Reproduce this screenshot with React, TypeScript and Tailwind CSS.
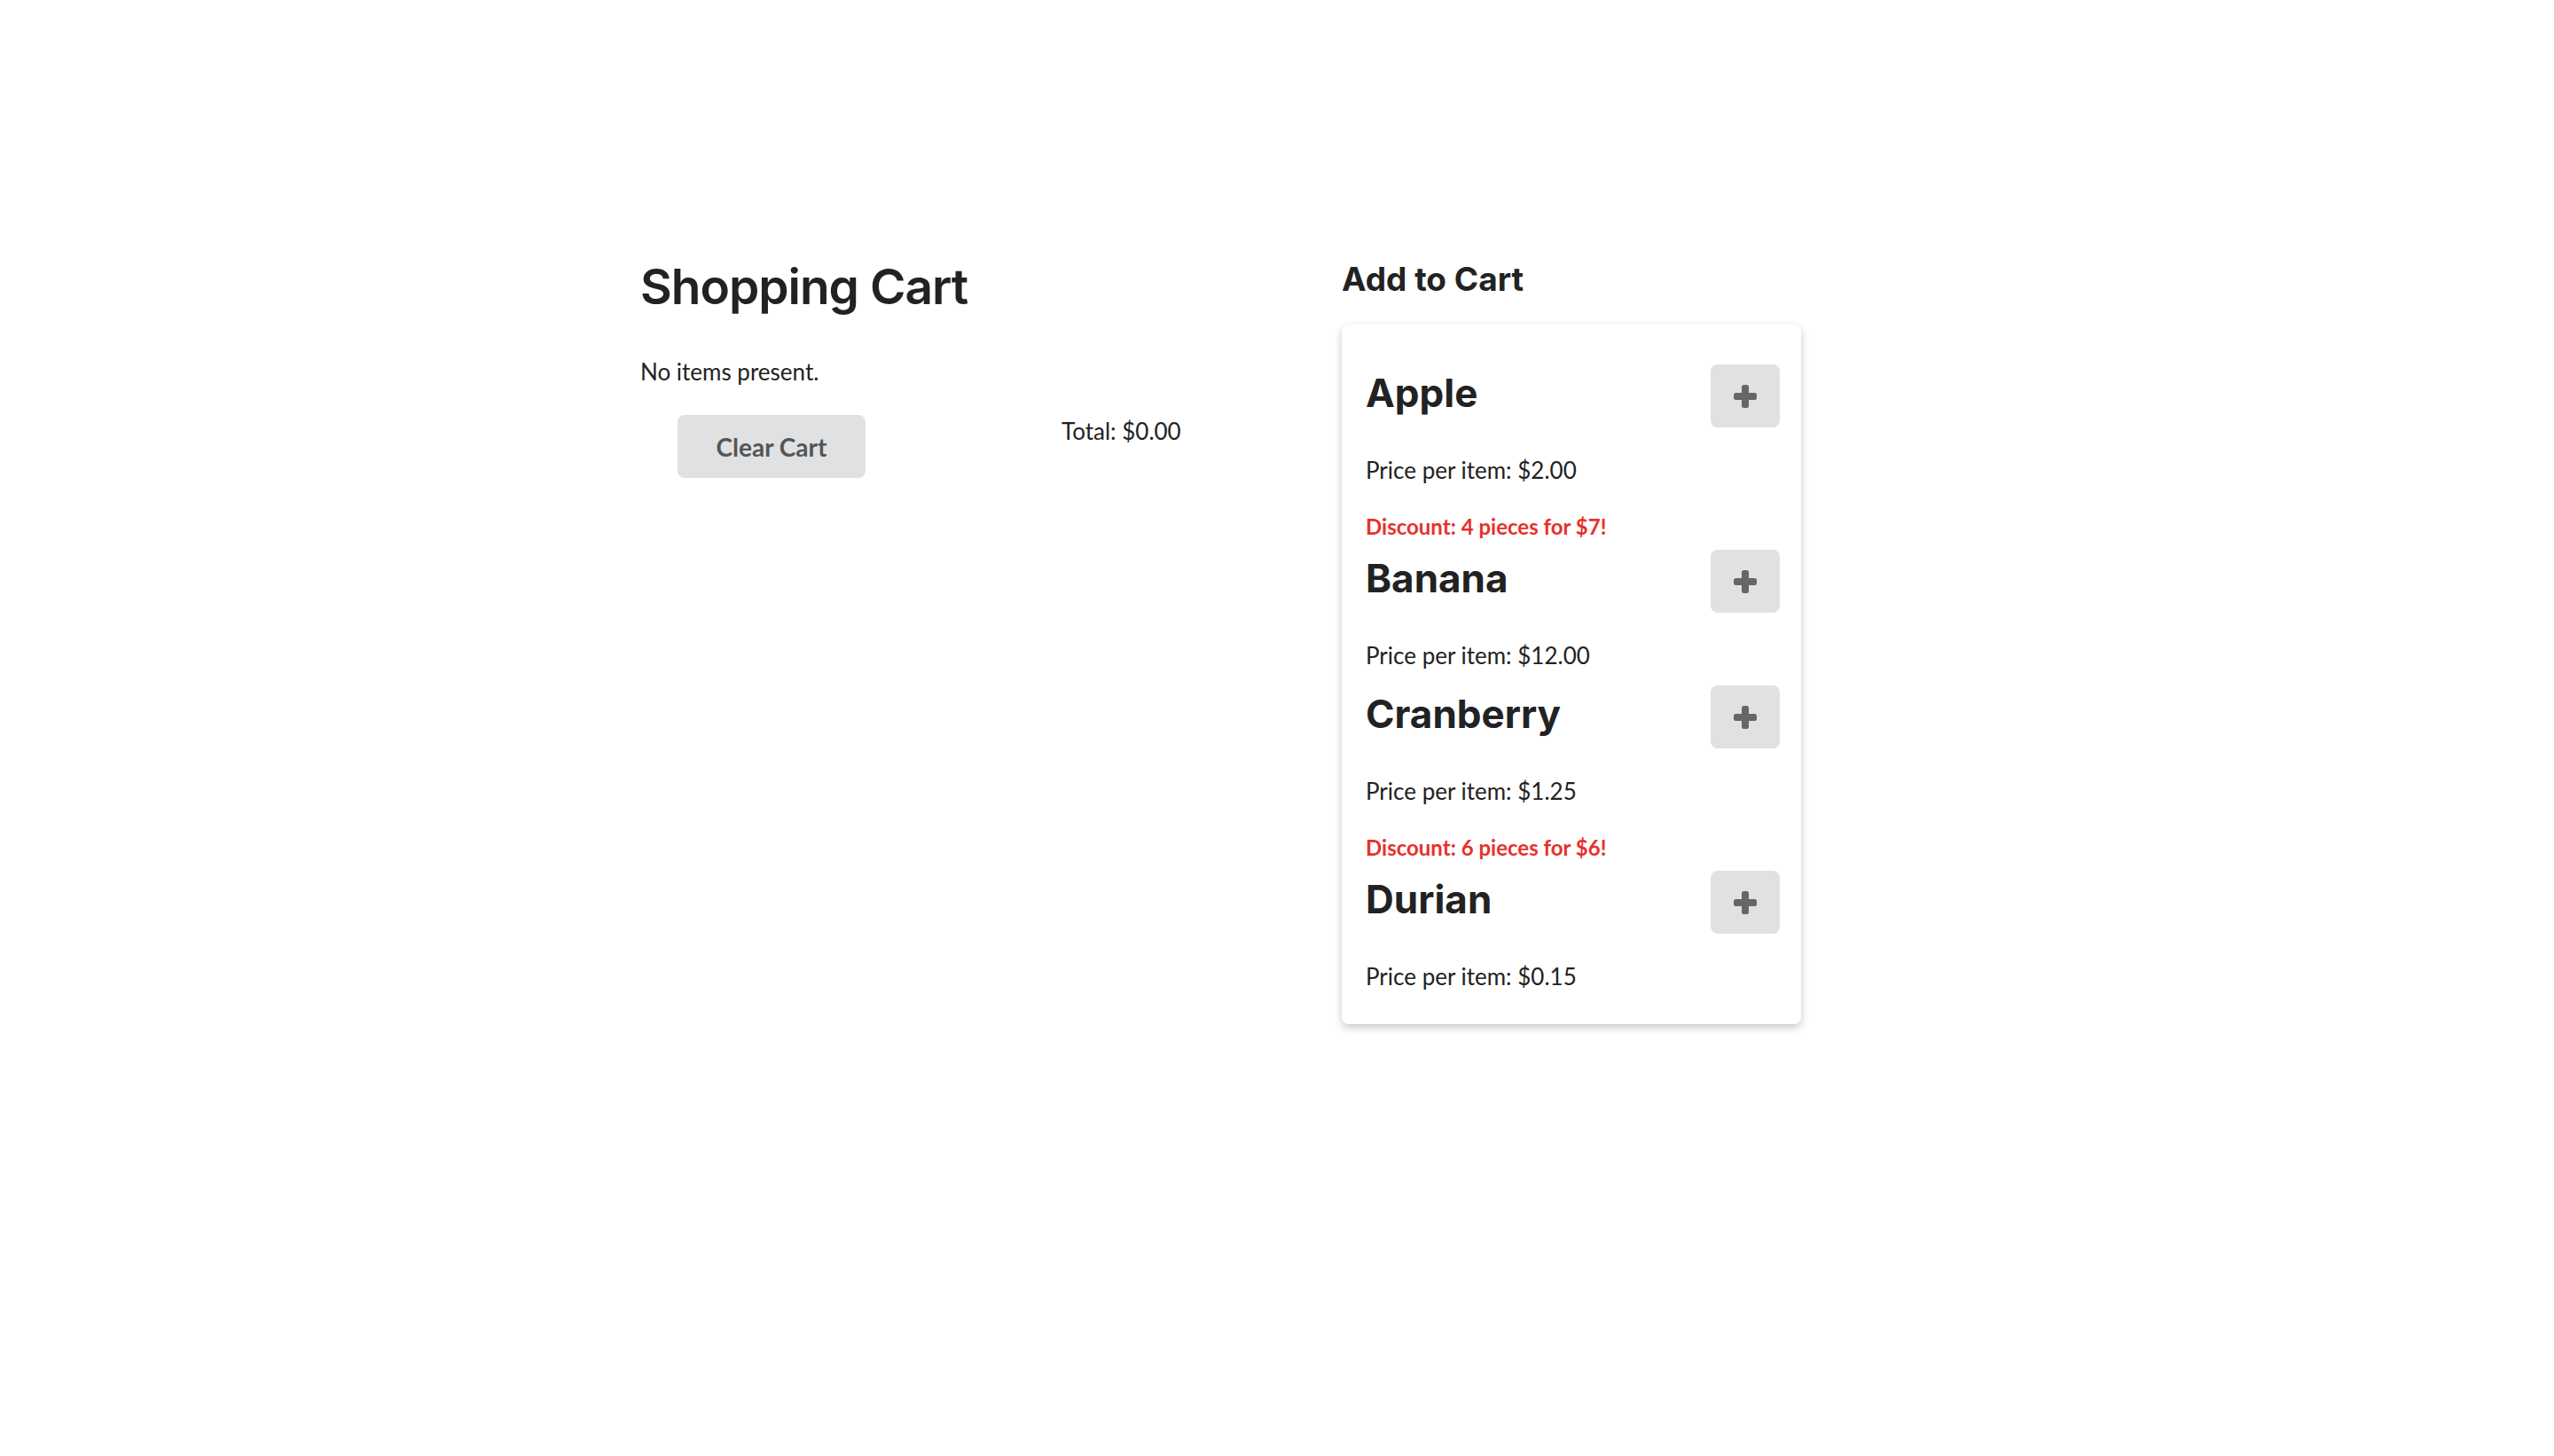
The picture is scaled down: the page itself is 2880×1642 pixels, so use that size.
const items = [
  { name: "Apple", price: "$2.00", discount: "Discount: 4 pieces for $7!" },
  { name: "Banana", price: "$12.00" },
  { name: "Cranberry", price: "$1.25", discount: "Discount: 6 pieces for $6!" },
  { name: "Durian", price: "$0.15" },
];

const body = { fontFamily: "Lato, 'Liberation Sans', sans-serif" };
const head = { fontFamily: "Inter, Roboto, sans-serif" };

function PlusIcon() {
  return (
    <svg width="26" height="26" viewBox="0 0 26 26" fill="#666666">
      <rect x="9" y="0" width="8" height="26" rx="2.5" />
      <rect x="0" y="9" width="26" height="8" rx="2.5" />
    </svg>
  );
}

function ProductRow({ name, price, discount }: { name: string; price: string; discount?: string }) {
  return (
    <div className="pb-[13px]">
      <div className="flex items-center justify-between">
        <h3 className="pb-[8px] text-[44px] font-bold leading-none text-[#222]" style={head}>
          {name}
        </h3>
        <button className="w-[78px] h-[71px] rounded-lg bg-[#e0e1e3] flex items-center justify-center">
          <PlusIcon />
        </button>
      </div>
      <p className="mt-[27px] text-[26px] leading-[42px] text-[#222]" style={body}>
        Price per item: {price}
      </p>
      {discount && (
        <p className="mt-[30px] text-[24px] leading-[26px] font-bold text-[#e6322b]" style={body}>
          {discount}
        </p>
      )}
    </div>
  );
}

export default function App() {
  return (
    <div className="min-h-screen bg-white">
      <div className="mx-auto w-[1440px] pt-[296px] flex">
        <div className="w-[793px] pl-[2px]">
          <h1 className="text-[55px] font-semibold leading-none tracking-[-1px] text-[#222]" style={head}>
            Shopping Cart
          </h1>
          <p className="mt-[47px] text-[26px] leading-[42px] text-[#222]" style={body}>
            No items present.
          </p>
          <div className="mt-[25px] flex items-start">
            <button
              className="ml-[42px] mt-[3px] w-[212px] h-[71px] rounded-lg bg-[#e0e1e3] text-[28px] font-bold text-[#555]"
              style={body}
            >
              Clear Cart
            </button>
            <span className="ml-[221px] text-[26px] leading-[42px] text-[#222]" style={body}>
              Total: $0.00
            </span>
          </div>
        </div>

        <div className="w-[518px]">
          <h2 className="text-[37px] font-bold leading-none text-[#222]" style={head}>
            Add to Cart
          </h2>
          <div className="mt-[33px] rounded-lg bg-white shadow-[0_4px_10px_0_rgba(0,0,0,0.22)] pt-[45px] pb-[20px] pl-[27px] pr-[24px]">
            {items.map((it) => (
              <ProductRow key={it.name} {...it} />
            ))}
          </div>
        </div>
      </div>
    </div>
  );
}
